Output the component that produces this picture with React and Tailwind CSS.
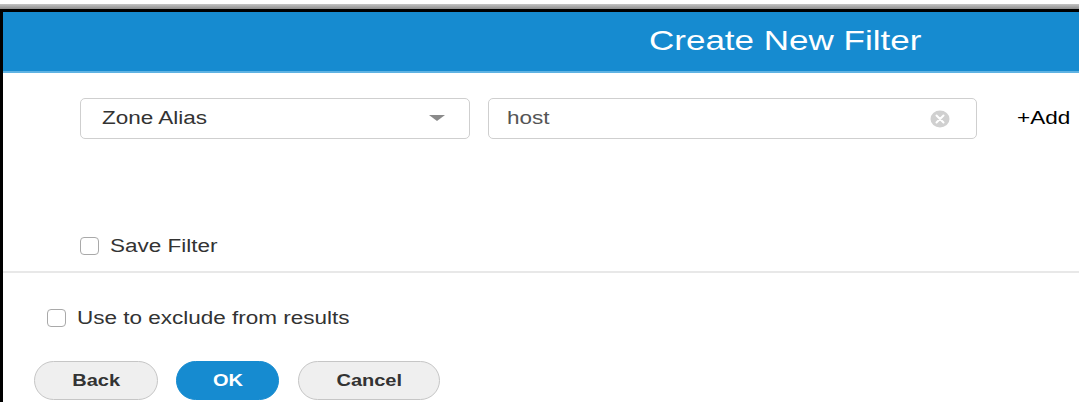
import React from 'react';

// the dialog's type is set a quarter wider than the face it uses
const Wide = ({ children, className = '' }) => (
  <span className={`inline-block scale-x-125 whitespace-nowrap ${className}`}>{children}</span>
);

const Checkbox = ({ label, className = '' }) => (
  <label className={`flex items-center gap-[11px] ${className}`}>
    <span className="w-[19px] h-[18px] rounded-[4px] border-[1.5px] border-[#a9a9a9] bg-white shrink-0" />
    <Wide className="origin-left text-[18px] text-[#333] leading-none">{label}</Wide>
  </label>
);

const PillButton = ({ children, primary, className = '' }) => (
  <button
    className={`h-[39px] rounded-full flex items-center justify-center ${
      primary
        ? 'bg-[#168bd0] text-white border border-[#168bd0]'
        : 'bg-[#efefef] text-[#333] border border-[#c6c6c6]'
    } ${className}`}
  >
    <Wide className="origin-center text-[16px] font-bold leading-none">{children}</Wide>
  </button>
);

export default function App() {
  return (
    <div className="w-[1079px] h-[402px] overflow-hidden bg-white flex flex-col font-['Liberation_Sans',Arial,sans-serif]">
      {/* window chrome above the dialog */}
      <div className="h-[4px] bg-white shrink-0" />
      <div className="h-[5px] bg-gradient-to-b from-[#c4c4c4] to-[#8e8e8e] shrink-0" />
      <div className="h-[3px] bg-black shrink-0" />

      <div className="flex-1 border-l-[3px] border-black flex flex-col">
        <header className="h-[61px] shrink-0 bg-[#168bd0] border-b-2 border-[#5fb3e3] flex items-center">
          <h1 className="ml-[646px] pb-[2px] text-white font-normal leading-none">
            <Wide className="origin-left text-[28px]">Create New Filter</Wide>
          </h1>
        </header>

        <div className="flex items-center pt-[25px] pl-[77px]">
          <div className="w-[390px] h-[41px] rounded-[5px] border border-[#cfcfcf] flex items-center justify-between pl-[21px] pr-[24px]">
            <Wide className="origin-left text-[18px] text-[#333]">Zone Alias</Wide>
            <svg width="16" height="7" viewBox="0 0 16 7">
              <path d="M0 0 L16 0 L8 6 Z" fill="#8a8a8a" />
            </svg>
          </div>

          <div className="ml-[18px] w-[489px] h-[41px] rounded-[5px] border border-[#cfcfcf] flex items-center justify-between pl-[18px] pr-[26px]">
            <Wide className="origin-left text-[18px] text-[#555]">host</Wide>
            <svg width="20" height="18" viewBox="0 0 20 18">
              <ellipse cx="10" cy="9" rx="9.5" ry="8.5" fill="#d0d0d0" />
              <path d="M6.5 5.5 L13.5 12.5 M13.5 5.5 L6.5 12.5" stroke="#fff" strokeWidth="2" strokeLinecap="round" />
            </svg>
          </div>

          <Wide className="ml-[40px] origin-left text-[18px] text-black">+Add</Wide>
        </div>

        <Checkbox label="Save Filter" className="mt-[98px] ml-[77px]" />

        <div className="mt-[16px] h-[2px] bg-[#e8e8e8]" />

        <Checkbox label="Use to exclude from results" className="mt-[36px] ml-[44px]" />

        <div className="flex items-center mt-[34px] ml-[31px] gap-[18px]">
          <PillButton className="w-[124px]">Back</PillButton>
          <PillButton primary className="w-[103px]">OK</PillButton>
          <PillButton className="w-[142px] ml-[1px]">Cancel</PillButton>
        </div>
      </div>
    </div>
  );
}
